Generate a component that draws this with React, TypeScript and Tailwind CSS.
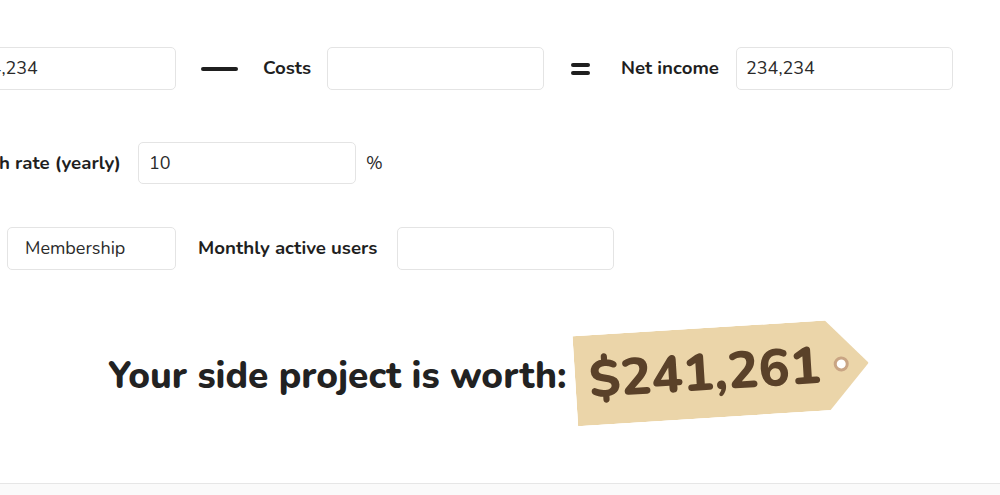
import React from "react";

const font = { fontFamily: "Nunito, Lato, 'Noto Sans', sans-serif" };

function Field({ value, w = "w-[217px]", pad = "pl-[9px]" }: { value?: string; w?: string; pad?: string }) {
  return (
    <div
      className={`${w} h-[43px] shrink-0 rounded-[5px] border border-[#e4e4e4] bg-white flex items-center ${pad} text-[18px] text-[#2a2a2a]`}
    >
      {value}
    </div>
  );
}

export default function App() {
  return (
    <div
      className="w-[1000px] h-[495px] bg-white overflow-hidden flex flex-col text-[#1f1f1f]"
      style={font}
    >
      {/* Row 1 */}
      <div className="mt-[47px] h-[43px] flex items-center ml-[-41px] shrink-0">
        <Field value="234,234" />
        <div className="ml-[25px] w-[37px] h-[4px] rounded-full bg-[#1f1f1f]" />
        <div className="ml-[25px] w-[48px] text-[18.7px] font-bold whitespace-nowrap">Costs</div>
        <div className="ml-[16px]">
          <Field />
        </div>
        <div className="ml-[27px] w-[19px] flex flex-col gap-[4px]">
          <div className="h-[4px] rounded-full bg-[#1f1f1f]" />
          <div className="h-[4px] rounded-full bg-[#1f1f1f]" />
        </div>
        <div className="ml-[31px] w-[98px] text-[18.7px] font-bold whitespace-nowrap">Net income</div>
        <div className="ml-[17px]">
          <Field value="234,234" />
        </div>
      </div>

      {/* Row 2 */}
      <div className="mt-[52px] h-[42px] flex items-center ml-[-179px] shrink-0">
        <div className="w-[300px] text-right text-[18.7px] font-bold whitespace-nowrap">Growth rate (yearly)</div>
        <div className="ml-[17px]">
          <div className="w-[218px] h-[42px] rounded-[5px] border border-[#e4e4e4] bg-white flex items-center pl-[10px] text-[18px] text-[#2a2a2a]">
            10
          </div>
        </div>
        <div className="ml-[10px] text-[18px] text-[#2a2a2a]">%</div>
      </div>

      {/* Row 3 */}
      <div className="mt-[43px] h-[43px] flex items-center ml-[7px] shrink-0">
        <Field value="Membership" w="w-[169px]" pad="pl-[17px]" />
        <div className="ml-[22px] w-[178px] text-[18.7px] font-bold whitespace-nowrap">Monthly active users</div>
        <div className="ml-[21px]">
          <Field />
        </div>
      </div>

      {/* Headline */}
      <div className="mt-[57px] flex items-center ml-[108px] shrink-0">
        <div className="w-[457px] pt-[10px] text-[37px] font-extrabold whitespace-nowrap text-[#222]">
          Your side project is worth:
        </div>
        <div className="ml-[10px] relative w-[294px] h-[90px] rotate-[-3.6deg]">
          <div className="absolute inset-0 bg-[#ebd5a9] [clip-path:polygon(0_0,86%_0,100%_50%,86%_100%,0_100%)]" />
          <div className="absolute left-[259px] top-[37px] w-[15px] h-[15px] rounded-full border-[3px] border-[#c9a584] bg-white" />
          <div className="absolute left-[14px] top-0 h-full flex items-center text-[52px] font-extrabold text-[#5a4129]">
            $241,261
          </div>
        </div>
      </div>

      <div className="flex-1" />
      <div className="h-[12px] shrink-0 border-t border-[#e6e6e6] bg-[#fafafa]" />
    </div>
  );
}
